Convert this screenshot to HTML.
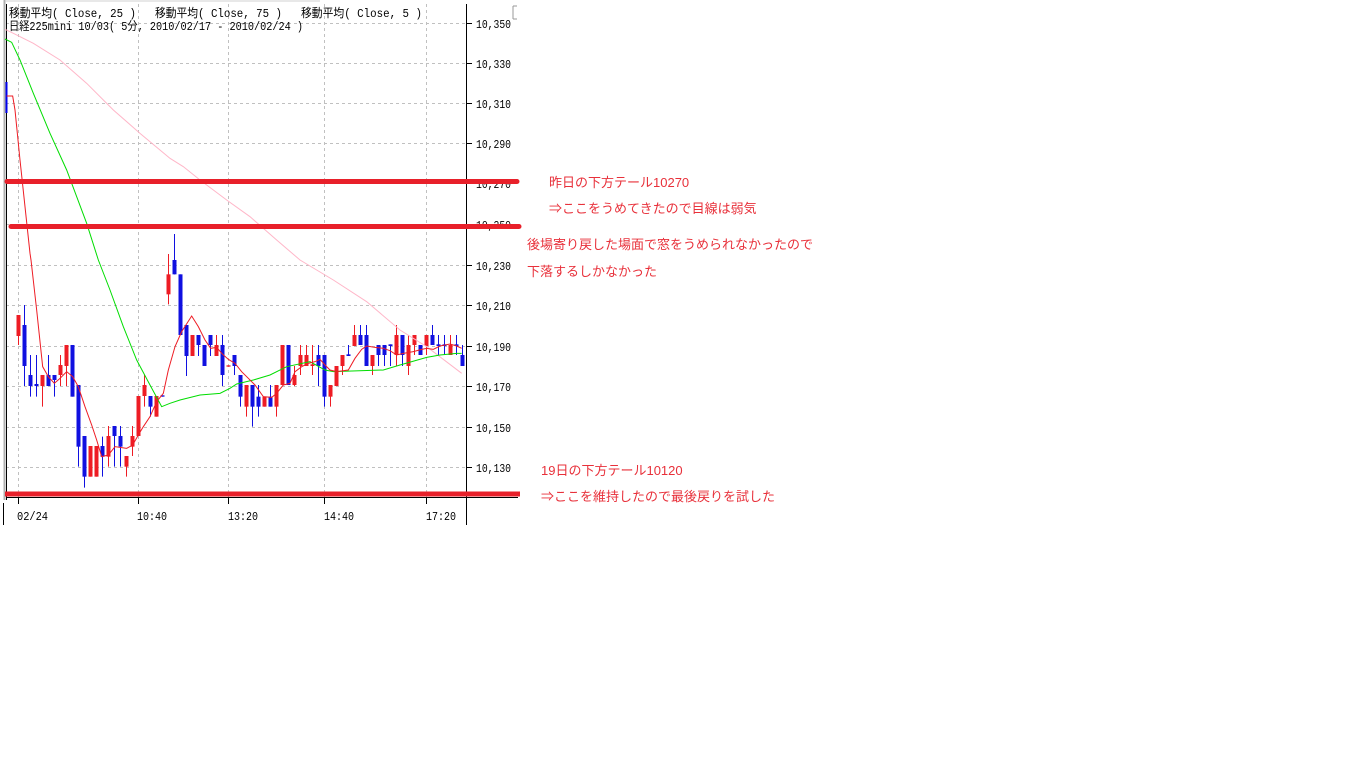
<!DOCTYPE html>
<html><head><meta charset="utf-8">
<style>
html,body{margin:0;padding:0;background:#fff;width:1366px;height:768px;overflow:hidden}
svg{position:absolute;left:0;top:0}
.ann{position:absolute;font:13px "Liberation Sans","Noto Sans CJK JP",sans-serif;color:#e8303a;white-space:nowrap;line-height:16px}
</style></head><body>
<svg id="c" width="1366" height="768" xmlns="http://www.w3.org/2000/svg">
<g stroke="#c0c0c0" stroke-dasharray="3,3" stroke-width="1">
<line x1="6" y1="23.5" x2="466" y2="23.5"/><line x1="6" y1="63.5" x2="466" y2="63.5"/>
<line x1="6" y1="103.5" x2="466" y2="103.5"/><line x1="6" y1="143.5" x2="466" y2="143.5"/>
<line x1="6" y1="183.5" x2="466" y2="183.5"/><line x1="6" y1="224.5" x2="466" y2="224.5"/>
<line x1="6" y1="265.5" x2="466" y2="265.5"/><line x1="6" y1="305.5" x2="466" y2="305.5"/>
<line x1="6" y1="346.5" x2="466" y2="346.5"/><line x1="6" y1="386.5" x2="466" y2="386.5"/>
<line x1="6" y1="427.5" x2="466" y2="427.5"/><line x1="6" y1="467.5" x2="466" y2="467.5"/>
<line x1="18.5" y1="4" x2="18.5" y2="497"/><line x1="138.5" y1="4" x2="138.5" y2="497"/>
<line x1="228.5" y1="4" x2="228.5" y2="497"/><line x1="324.5" y1="4" x2="324.5" y2="497"/>
<line x1="426.5" y1="4" x2="426.5" y2="497"/>
</g>
<line x1="4.5" y1="0" x2="4.5" y2="500" stroke="#b0b0b0" stroke-width="2"/>
<line x1="6.5" y1="4" x2="6.5" y2="500" stroke="#000" stroke-width="1"/>
<line x1="3.5" y1="503" x2="3.5" y2="525" stroke="#000"/>
<line x1="5" y1="1" x2="320" y2="1" stroke="#d0d0d0"/>
<line x1="466.5" y1="4" x2="466.5" y2="525" stroke="#000"/>
<line x1="6" y1="497.5" x2="518" y2="497.5" stroke="#000"/>
<g stroke="#000"><line x1="18.5" y1="497" x2="18.5" y2="504"/><line x1="138.5" y1="497" x2="138.5" y2="504"/><line x1="228.5" y1="497" x2="228.5" y2="504"/><line x1="324.5" y1="497" x2="324.5" y2="504"/><line x1="426.5" y1="497" x2="426.5" y2="504"/></g>
<g stroke="#000"><line x1="466" y1="23.5" x2="472" y2="23.5"/><line x1="466" y1="63.5" x2="472" y2="63.5"/><line x1="466" y1="103.5" x2="472" y2="103.5"/><line x1="466" y1="143.5" x2="472" y2="143.5"/><line x1="466" y1="183.5" x2="472" y2="183.5"/><line x1="466" y1="224.5" x2="472" y2="224.5"/><line x1="466" y1="265.5" x2="472" y2="265.5"/><line x1="466" y1="305.5" x2="472" y2="305.5"/><line x1="466" y1="346.5" x2="472" y2="346.5"/><line x1="466" y1="386.5" x2="472" y2="386.5"/><line x1="466" y1="427.5" x2="472" y2="427.5"/><line x1="466" y1="467.5" x2="472" y2="467.5"/></g>
<path d="M513 6 H517 M513 6 V19 M513 19 H517" stroke="#999" fill="none"/>
<g font-family="Liberation Mono,monospace" font-size="12" fill="#000" lengthAdjust="spacingAndGlyphs">
<text x="476" y="28" textLength="35" lengthAdjust="spacingAndGlyphs">10,350</text><text x="476" y="68" textLength="35" lengthAdjust="spacingAndGlyphs">10,330</text><text x="476" y="108" textLength="35" lengthAdjust="spacingAndGlyphs">10,310</text>
<text x="476" y="148" textLength="35" lengthAdjust="spacingAndGlyphs">10,290</text><text x="476" y="188" textLength="35" lengthAdjust="spacingAndGlyphs">10,270</text><text x="476" y="229" textLength="35" lengthAdjust="spacingAndGlyphs">10,250</text>
<text x="476" y="270" textLength="35" lengthAdjust="spacingAndGlyphs">10,230</text><text x="476" y="310" textLength="35" lengthAdjust="spacingAndGlyphs">10,210</text><text x="476" y="351" textLength="35" lengthAdjust="spacingAndGlyphs">10,190</text>
<text x="476" y="391" textLength="35" lengthAdjust="spacingAndGlyphs">10,170</text><text x="476" y="432" textLength="35" lengthAdjust="spacingAndGlyphs">10,150</text><text x="476" y="472" textLength="35" lengthAdjust="spacingAndGlyphs">10,130</text>
<text x="17" y="520" textLength="31" lengthAdjust="spacingAndGlyphs">02/24</text><text x="137" y="520" textLength="30" lengthAdjust="spacingAndGlyphs">10:40</text><text x="228" y="520" textLength="30" lengthAdjust="spacingAndGlyphs">13:20</text>
<text x="324" y="520" textLength="30" lengthAdjust="spacingAndGlyphs">14:40</text><text x="426" y="520" textLength="30" lengthAdjust="spacingAndGlyphs">17:20</text>
</g>
<g font-family="Liberation Mono,'Noto Sans CJK JP',monospace" font-size="12" fill="#000">
<text x="9" y="17" textLength="127" lengthAdjust="spacingAndGlyphs">移動平均( Close, 25 )</text>
<text x="155" y="17" textLength="127" lengthAdjust="spacingAndGlyphs">移動平均( Close, 75 )</text>
<text x="301" y="17" textLength="121" lengthAdjust="spacingAndGlyphs">移動平均( Close, 5 )</text>
<text x="9" y="30" textLength="294" lengthAdjust="spacingAndGlyphs">日経225mini 10/03( 5分, 2010/02/17 - 2010/02/24 )</text>
</g>
<g id="cd"></g>
<g id="ma"></g>
<line x1="7" y1="181.5" x2="517" y2="181.5" stroke="#e8202a" stroke-width="5" stroke-linecap="round"/>
<line x1="11" y1="226.5" x2="519" y2="226.5" stroke="#e8202a" stroke-width="5" stroke-linecap="round"/>
<line x1="5" y1="494" x2="520" y2="494" stroke="#e8202a" stroke-width="5"/>
</svg>
<div class="ann" style="left:549px;top:175px">昨日の下方テール10270</div>
<div class="ann" style="left:549px;top:201px">⇒ここをうめてきたので目線は弱気</div>
<div class="ann" style="left:527px;top:237px">後場寄り戻した場面で窓をうめられなかったので</div>
<div class="ann" style="left:527px;top:264px">下落するしかなかった</div>
<div class="ann" style="left:541px;top:463px">19日の下方テール10120</div>
<div class="ann" style="left:541px;top:489px">⇒ここを維持したので最後戻りを試した</div>
<script>
var NS="http://www.w3.org/2000/svg";
function el(p,t,a){var e=document.createElementNS(NS,t);for(var k in a)e.setAttribute(k,a[k]);p.appendChild(e);return e;}
var cd=document.getElementById('cd');
var C=[
[18,'r',165,228,165,255],[24,'b',195,318,135,378],[30,'b',345,378,285,410],[36,'b',372,378,285,410],
[42,'r',345,378,345,440],[48,'b',345,378,285,378],[54,'b',345,360,345,410],[60,'r',315,345,285,378],
[66,'r',255,318,255,378],[72,'b',255,410,255,410],[78,'b',375,560,375,620],[84,'b',528,650,528,683],
[90,'r',558,650,558,650],[96,'r',558,650,558,650],[102,'b',558,590,530,650],[108,'r',528,590,498,620],
[114,'b',498,528,498,620],[120,'b',528,560,498,620],[126,'r',588,620,588,650],[132,'r',528,560,498,588],
[138,'r',408,528,408,528],[144,'r',375,408,345,440],[150,'b',408,440,408,470],[156,'r',408,470,408,470],
[162,'b',406,410,406,410],[168,'r',43,103,-18,133],[174,'b',0,43,-78,43],[180,'b',43,225,43,225],
[186,'b',195,288,195,348],[192,'r',225,288,225,288],[198,'b',225,255,225,288],[204,'b',255,318,255,318],
[210,'b',225,255,225,288],[216,'r',255,288,225,288],[222,'b',255,345,225,378],[228,'r',316,320,316,320],
[234,'b',285,318,285,345],[240,'b',345,410,345,440],[246,'r',375,440,375,470],[252,'b',375,440,375,500],
[258,'b',410,440,375,470],[264,'r',410,440,410,440],[270,'b',410,440,375,440],[276,'r',375,440,375,470],
[282,'r',255,375,255,375],[288,'b',255,375,255,375],[294,'r',345,375,318,378],[300,'r',285,318,255,345],
[306,'r',285,318,255,318],[312,'r',313,318,255,345],[318,'b',285,318,255,378],[324,'b',285,410,285,440],
[330,'r',375,410,375,440],[336,'r',318,378,318,378],[342,'r',285,318,285,345],[348,'b',283,288,255,288],
[354,'r',225,258,195,258],[360,'b',225,255,195,255],[366,'b',225,318,195,318],[372,'r',285,318,285,345],
[378,'b',255,285,255,318],[384,'b',255,285,255,318],[390,'b',253,258,253,318],[396,'r',225,285,195,318],
[402,'b',225,285,225,318],[408,'r',255,318,225,345],[414,'r',225,255,225,285],[420,'b',255,285,255,285],
[426,'r',225,258,225,285],[432,'b',225,255,195,255],[438,'b',253,258,225,285],[444,'b',253,258,225,285],
[450,'r',255,285,225,285],[456,'b',253,258,225,285],[462,'b',285,318,255,318]];
function Y(z){return 260+z/3;}
el(cd,'line',{x1:6.5,y1:82,x2:6.5,y2:113,stroke:'#0000ee','stroke-width':2});
C.forEach(function(c){var col=c[1]=='r'?'#ee1c24':'#1010e0';var x=c[0];
 el(cd,'line',{x1:x+0.5,y1:Y(c[4]),x2:x+0.5,y2:Y(c[5]),stroke:col,'stroke-width':1});
 var t=Y(c[2]),b=Y(c[3]);if(b-t<1)b=t+1;
 el(cd,'rect',{x:x-1.5,y:t,width:4,height:b-t,fill:col});});
var ma=document.getElementById('ma');
function pl(pts,col){var s=pts.map(function(p){return p.length==3?(p[0]/3)+','+(p[1]/3):(p[0]/3)+','+(260+p[1]/3)}).join(' ');
 el(ma,'polyline',{points:s,fill:'none',stroke:col,'stroke-width':1});}
pl([[15,88,1],[40,100,1],[100,130,1],[180,180,1],[260,250,1],[340,330,1],[420,400,1],[510,475,1],[550,500,1],[600,540,1],[680,600,1],[750,650,1],[830,720,1],[900,780,1],[1000,60],[1100,125],[1200,210],[1280,260],[1385,340]],'#ffb6c8');
pl([[15,117,1],[35,127,1],[60,180,1],[100,280,1],[150,400,1],[200,510,1],[260,670,1],[295,780,1],[330,90],[370,200],[410,300],[450,375],[485,440],[510,430],[540,420],[600,405],[660,400],[690,385],[710,372],[760,360],[810,345],[860,320],[930,305],[975,330],[1000,335],[1150,330],[1200,315],[1280,292],[1320,285],[1370,280],[1385,280]],'#00dd00');
pl([[20,288,1],[38,288,1],[45,330,1],[60,480,1],[75,620,1],[90,760,1],[93,0],[110,150],[128,320],[145,350],[163,370],[180,355],[200,335],[218,350],[235,380],[255,440],[275,495],[290,540],[305,590],[325,585],[345,560],[380,565],[398,555],[415,525],[430,500],[450,470],[470,425],[490,400],[505,330],[525,260],[545,215],[575,168],[595,200],[615,240],[632,265],[650,262],[665,280],[685,298],[705,310],[725,335],[745,355],[765,375],[790,410],[815,412],[830,400],[850,375],[870,370],[885,335],[905,320],[925,310],[945,305],[960,298],[975,315],[990,330],[1010,335],[1045,330],[1065,295],[1085,268],[1100,258],[1125,262],[1150,265],[1170,272],[1190,285],[1210,280],[1240,275],[1265,268],[1280,265],[1300,268],[1320,258],[1350,252],[1370,258],[1385,265]],'#ee1c24');
</script>
</body></html>
